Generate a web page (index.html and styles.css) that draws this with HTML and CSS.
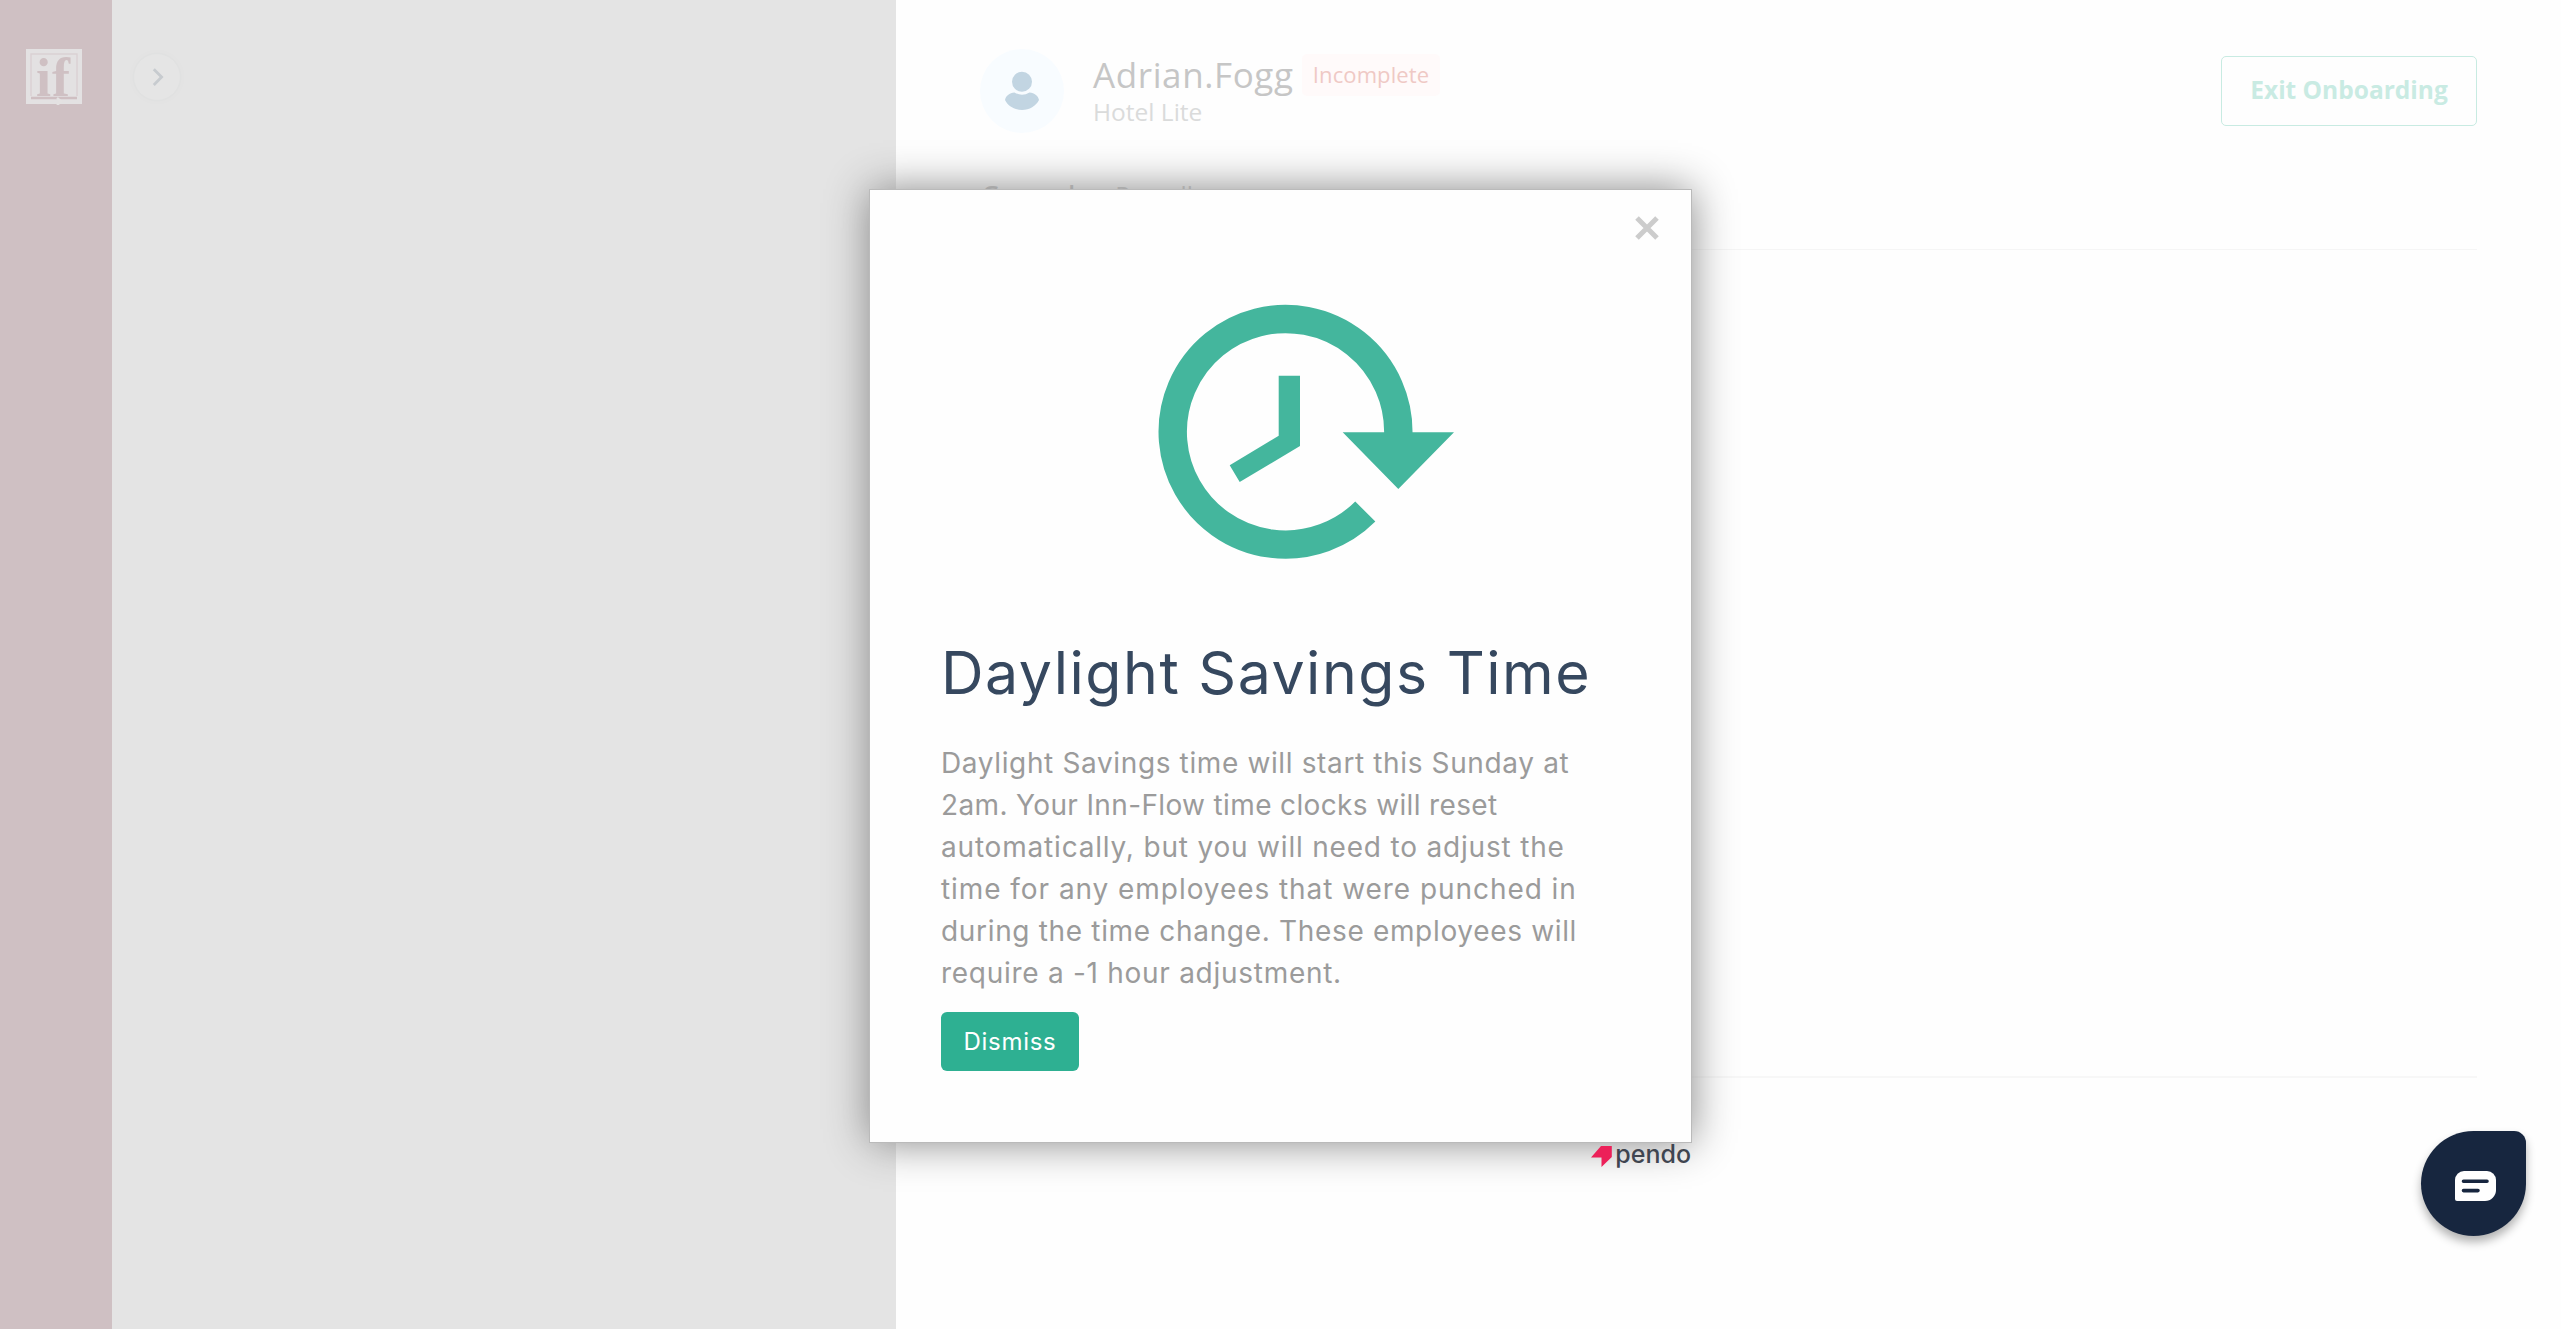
FILE: index.html
```
<!DOCTYPE html>
<html lang="en">
<head>
<meta charset="utf-8">
<title>Onboarding</title>
<link rel="stylesheet" href="styles.css">
</head>
<body>
<div class="app">
  <nav class="rail">
    <div class="logo">
      <span class="logo-text">if</span>
      <svg class="logo-frame" viewBox="0 0 56 56"><path d="M5 47V5h46v42" fill="none" stroke="#dad1d3" stroke-width="1.4"/><path d="M5 49h46" stroke="#cfbfc2" stroke-width="2.4"/><path d="M31 49l4 3.500-4 3.500" fill="none" stroke="#e4e2e2" stroke-width="2.4"/></svg>
    </div>
  </nav>
  <aside class="panel">
    <div class="expand"><svg width="48" height="48" viewBox="0 0 48 48"><path d="M20.800 16.300l7.800 7.800-7.800 7.800" fill="none" stroke="#c7cbcf" stroke-width="2.800"/></svg></div>
  </aside>
  <main class="content">
    <header class="profile">
      <div class="avatar"><svg width="84" height="84" viewBox="0 0 84 84"><ellipse cx="42" cy="32.700" rx="10" ry="10"/><path d="M34.500 43.500q7.500 4.500 15 0c5 0 9 4 9.500 7.500-3 6-9.500 10-17 10s-14-4-17-10c.5-3.500 4.500-7.500 9.500-7.500z"/></svg></div>
      <div class="who">
        <div class="name-row"><span class="name">Adrian.Fogg</span><span class="badge">Incomplete</span></div>
        <div class="hotel">Hotel Lite</div>
      </div>
      <button class="exit">Exit Onboarding</button>
    </header>
    <div class="tabs"><span class="tab active">General</span><span class="tab">Payroll</span></div>
    <section class="form"></section>
  </main>
</div>
<div class="overlay">
  <div class="modal">
    <svg class="close" viewBox="0 0 24 24"><path d="M2 2l20 20M22 2L2 22" stroke="#ccc" stroke-width="5"/></svg>
    <svg class="clock" viewBox="0 0 296 256"><path d="M240.300 130A112.800 112.800 0 1 0 207.300 207.500" fill="none" stroke="#44b69d" stroke-width="28.400"/><path d="M184.700 128.300H296L240.300 185zM120.700 71.700H142V142L81.700 178 71.700 161.300 120.700 131.700z" fill="#44b69d"/></svg>
    <h1 class="title">Daylight Savings Time</h1>
    <p class="message">
      <span class="line-1">Daylight Savings time will start this Sunday at</span>
      <span class="line-2">2am. Your Inn-Flow time clocks will reset</span>
      <span class="line-3">automatically, but you will need to adjust the</span>
      <span class="line-4">time for any employees that were punched in</span>
      <span class="line-5">during the time change. These employees will</span>
      <span class="line-6">require a -1 hour adjustment.</span>
    </p>
    <button class="dismiss">Dismiss</button>
  </div>
  <div class="brand"><svg width="21" height="21" viewBox="0 0 21 21"><path d="M10 0h10.800V11L10.500 21V11.500H0z" fill="#ec2059"/></svg><span class="brand-name">pendo</span></div>
</div>
<div class="chat"><svg width="41" height="30" viewBox="0 0 41 30"><path d="M9 0h23a9 9 0 0 1 9 9v10a11 11 0 0 1-11 11H2a2 2 0 0 1-2-2V9a9 9 0 0 1 9-9z" fill="#fff"/><path d="M8.500 10.200h23.500M8.500 19.600h14.500" stroke="#17263f" stroke-width="3.600" stroke-linecap="round"/></svg></div>
</body>
</html>
```
FILE: styles.css
```
* { box-sizing: border-box; }
body { margin: 0; height: 1329px; overflow: hidden; background: #fefefe; font-family: "Open Sans", sans-serif; }
button { font: inherit; margin: 0; padding: 0; }
.app { display: flex; height: 1329px; }
.rail { width: 112px; background: #cfc0c3; padding: 49px 0 0 26px; }
.logo { position: relative; width: 56px; height: 55px; background: #e3e1e2; padding-left: 10px; }
.logo-text { display: block; font: bold 54px/59px "Liberation Serif", serif; color: #cfc0c3; letter-spacing: 1px; }
.logo-frame { position: absolute; left: 0; top: 0; width: 56px; height: 56px; }
.panel { width: 784px; background: #e4e4e4; padding: 53px 0 0 21px; }
.expand { width: 48px; height: 48px; border-radius: 50%; border: 1px solid #e0e1e1; background: #e5e5e5; box-shadow: 0 0 10px rgba(0,0,0,.02); }
.expand svg { display: block; margin: -1px; }
.content { flex: 1; padding: 49px 84px 0; }
.profile { display: flex; height: 84px; }
.avatar { width: 84px; height: 84px; border-radius: 50%; background: #f8fcff; fill: #c2d5e2; }
.avatar svg { display: block; }
.who { margin-left: 29px; flex: 1; }
.name-row { display: flex; height: 47px; align-items: flex-start; }
.name { width: 209px; font-size: 35px; line-height: 51px; font-weight: 500; letter-spacing: .6px; color: #c6c6c6; white-space: nowrap; }
.badge { margin-top: 5px; height: 42px; width: 138px; border-radius: 5px; background: #fffafa; color: #efc9c5; font-size: 22px; font-weight: 500; letter-spacing: .1px; line-height: 41px; text-align: center; }
.hotel { font-size: 24.5px; line-height: 31px; color: #dadbdb; }
.exit { width: 256px; height: 70px; margin-top: 7px; padding-bottom: 3px; border: 1px solid #c8ebe2; border-radius: 5px; background: transparent; color: #c9ebe3; font-size: 24.5px; font-weight: 700; }
.tabs { display: flex; gap: 40px; height: 117px; padding: 45px 0 0 2px; border-bottom: 1px solid #f5f5f5; font-size: 24.5px; line-height: 34px; color: #ccc; }
.active { font-weight: 600; color: #c4c4c4; }
.form { height: 828px; border-bottom: 2px solid #f7f7f7; }
.overlay { position: absolute; inset: 0; padding-top: 189px; display: flex; flex-direction: column; align-items: center; font-family: Inter, sans-serif; }
.modal { position: relative; width: 823px; height: 954px; background: #fefefe; border: 1px solid #bababa; box-shadow: 0 0 40px #888; padding: 114px 71px 0; }
.close { position: absolute; right: 32px; top: 26px; width: 24px; height: 24px; }
.clock { display: block; width: 296px; height: 256px; margin-left: 217px; }
.title { margin: 71px 0 0; height: 91px; font-size: 59px; line-height: 84px; font-weight: 400; letter-spacing: 1.5px; color: #36485f; white-space: nowrap; }
.message { margin: 20px 0 0; font-size: 28px; line-height: 42px; color: #9b9b9b; display: flex; flex-direction: column; align-items: flex-start; white-space: nowrap; }
.line-1 { letter-spacing: .63px; }
.line-2 { letter-spacing: .36px; }
.line-3 { letter-spacing: .81px; }
.line-4 { letter-spacing: .94px; }
.line-5 { letter-spacing: .67px; }
.line-6 { letter-spacing: .72px; }
.dismiss { display: block; margin-top: 18px; width: 138px; height: 59px; border: 0; border-radius: 6px; background: #2eb092; color: #fff; font-size: 24px; letter-spacing: .7px; }
.brand { width: 823px; display: flex; justify-content: flex-end; gap: 3px; padding: 3px 1px 0 0; position: relative; font-size: 25px; line-height: 28px; color: #3f4550; }
.brand-name { margin-top: -6px; font-weight: 500; }
.chat { position: absolute; left: 2421px; top: 1131px; width: 105px; height: 105px; border-radius: 53px 12px 53px 53px; background: #17263f; box-shadow: 0 6px 10px rgba(0,0,0,.3); padding: 40px 0 0 34px; }
.chat svg { display: block; }
```
